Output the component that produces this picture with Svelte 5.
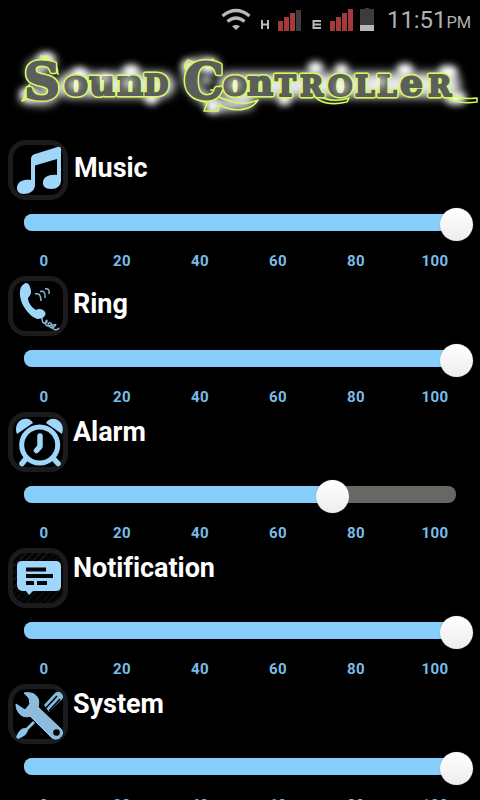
<script>
  const channels = [
    { name: 'Music', icon: 'music', value: 100, low: true },
    { name: 'Ring', icon: 'phone', value: 100, low: true },
    { name: 'Alarm', icon: 'alarm', value: 71.3 },
    { name: 'Notification', icon: 'message', value: 100 },
    { name: 'System', icon: 'tools', value: 100 }
  ];
  const ticks = [0, 20, 40, 60, 80, 100];
</script>

{#snippet logo(cls)}
  <g class={cls}>
    <text class="word"><tspan class="initial" x="24" y="99">S</tspan><tspan class="mid" x="64" y="95">o</tspan><tspan class="mid" x="89" y="95">u</tspan><tspan class="mid" x="117" y="95">n</tspan><tspan class="cap" x="144" y="95">D</tspan></text>
    <text class="word"><tspan class="initial" x="184" y="99">C</tspan><tspan class="mid" x="223" y="95">o</tspan><tspan class="mid" x="247" y="95">n</tspan><tspan class="cap" x="275" y="96">T</tspan><tspan class="cap" x="300" y="96">R</tspan><tspan class="cap" x="328" y="96">O</tspan><tspan class="cap" x="355" y="96">L</tspan><tspan class="cap" x="377" y="96">L</tspan><tspan class="mid" x="400" y="95">e</tspan><tspan class="cap" x="428" y="96">R</tspan></text>
  </g>
{/snippet}

<div class="screen">
  <header class="status">
    <svg class="signals" width="166" height="36" viewBox="0 0 166 36" aria-hidden="true">
      <g fill="none" stroke="#b8b8b8" stroke-width="3.3">
        <path d="M2.500 16Q16 5 29.500 16" />
        <path d="M7.500 21.500Q16 14.500 24.500 21.500" />
      </g>
      <path d="M12 26.300Q16 23.500 20 26.300L16 30Z" fill="#b8b8b8" />
      <path d="M42 20V29M48 20V29M42 24.500H48" stroke="#b8b8b8" stroke-width="2" />
      <path d="M101 21H93.500V28H101M93.500 24.500H101" fill="none" stroke="#b8b8b8" stroke-width="2" />
      <g fill="#a33a3b">
        <path d="M58 21h5v10h-5zM64 17h5v14h-5zM70 13h5v18h-5zM110 21h5v10h-5zM116 17h5v14h-5zM122 13h5v18h-5zM128 9h5v22h-5z" />
        <path d="M76 10h5v21h-5z" fill="#3c3c3c" />
      </g>
      <path d="M140 9h5V8h4v1h5v22h-14z" fill="#3c3c3c" />
      <path d="M140 25h14v6h-14z" fill="#b8b8b8" />
    </svg>
    <span class="clock">11:51<small>PM</small></span>
  </header>

  <svg class="logo" width="480" height="100" viewBox="0 36 480 100" aria-label="Sound Controller">
    <defs>
      <filter id="halo" filterUnits="userSpaceOnUse" x="0" y="36" width="480" height="100"><feGaussianBlur stdDeviation="5" /></filter>
      <filter id="sparks" filterUnits="userSpaceOnUse" x="0" y="36" width="480" height="100"><feGaussianBlur stdDeviation="3.5" /></filter>
    </defs>
    <g filter="url(#halo)" fill="none" stroke="#fff" stroke-linecap="round" stroke-linejoin="round">
      <path d="M50 63C32 62 27 71 40 79S60 96 44 99L26 97" stroke-width="12" opacity=".85" />
      <path d="M70 85H162M230 85H448" stroke-width="25" opacity=".9" />
      <path d="M213 65C185 58 182 81 202 96L220 106L248 103" stroke-width="12" opacity=".85" />
    </g>
    <g filter="url(#sparks)" fill="none" stroke="#fff" stroke-linecap="round">
      <path d="M27 94h5M44 59h4M78 74h3M129 71h4M151 98h1M188 66h1M208 66h2M284 99h1M314 68h3M341 70h1M403 70h4M445 72h6M212 107h1M452 98h8" stroke-width="13" />
    </g>

    <g class="swashes">
      <path d="M41 65Q47 61 41 56L51 60Q58 65 58 75M30 84Q27 89 25 90Q27 95 22 101Q32 95 41 101" />
      <path d="M187 71Q182 66 188 60Q197 65 204 60Q210 63 213 59L215 67M186 88C193 101 204 101 207 103L204 111H218L219 105C239 115 254 107 258 100C243 107 227 101 217 96L219 90H210" />
      <path d="M317 94Q330 104 349 98L347 102Q325 107 315 97M448 94Q462 100 477 98V102Q457 105 446 96" />
    </g>
    {@render logo('outline')}
    {@render logo('face')}
    <g filter="url(#sparks)" fill="none" stroke="#fff" stroke-linecap="round" opacity=".85">
      <path d="M74 85h1M104 78h1M128 83h1M206 80h1M234 85h1M341 87h1M380 82h1" stroke-width="9" />
    </g>
  </svg>

  <main>
    {#each channels as channel}
      <section>
        <div class="heading">
          <div class="badge" class:hatched={channel.icon === 'message'}>
            <svg width="60" height="60" viewBox="0 0 60 60" fill="#9fd7fb" aria-hidden="true">
              {#if channel.icon === 'music'}
                <path d="M23 19Q23 15 27 14L48 7.500Q53 5.500 53 9V40C53 46 49 49 43 49C37 49 34.500 46 35 42C35.500 37 41 34 49 35V19L27 25.500V45C27 51 21 54 16 54C11 54 8.500 51 9 47C10 41 16 39 23 40Z" />
              {:else if channel.icon === 'phone'}
                <path d="M16 8C10 11 11 23 16 31C20 38 27 43 30 43C34 43 38 40 37.500 37C36 33 31 32 28 34C23 31 20 26 20 22C23 19 24 16 22 11C21 7 18 6 16 8Z" />
                <g fill="none" stroke="#86b8d5" stroke-width="1.500">
                  <path d="M27 18Q33 16 33 25M32 15.500Q38 14 37 22M37 13Q42 12 41 18" />
                  <path d="M34 42C34 49 39 48 39 45S35 50 40 50S44 46 41 47S43 54 46 51S48 48 45 49S47 57 51 52" />
                </g>
              {:else if channel.icon === 'alarm'}
                <path d="M9 22C7 17 8 11 13 8C18 5 24 8 25 11ZM38 11C40 7 46 5 51 9C56 13 55 19 54 22Z" />
                <circle cx="31.700" cy="33" r="18" fill="none" stroke="#9fd7fb" stroke-width="5" />
                <path d="M32 24V34.500L28.500 38.500M18.500 46L14 51.500M45 46L50 51.500" fill="none" stroke="#9fd7fb" stroke-width="5.500" stroke-linecap="round" stroke-linejoin="round" />
              {:else if channel.icon === 'message'}
                <path d="M14 13H49Q53 14 53 18V38Q53 43 48 43H25L21 47L18 43H14Q9 42 9 37V18Q9 13 14 13Z" />
                <path d="M18 19.500H38V23.500H18ZM18 26H45V30H18ZM18 33H26V37H18ZM29 33H39V37H29Z" fill="#050607" />
              {:else}
                <path d="M25 37L27 39L20 46Q20 51 10 55L8 53Q12 43 18 44Z" fill="#8ac4e8" />
                <path d="M36 21L47 9Q51 6 54 10Q57 14 52 17L41 28Z" fill="#86bce0" />
                <path d="M38 24L49 12M41 27L52 15" stroke="#06080b" stroke-width="1.700" />
                <path d="M16 9C27 7 33 14 30 23L53 45C58 51 49 59 43 53L22 32C15 35 8 29 8 20L17 26L22 20L21 14Z" fill="#8dbbdc" stroke="#8dcef8" stroke-width="1" />
                <circle cx="48.500" cy="48.500" r="3.300" fill="#000" />
              {/if}
            </svg>
          </div>
          <h2 class:low={channel.low} class:wide={channel.icon === 'music'}>{channel.name}</h2>
        </div>
        <div class="slider" role="slider" aria-label={channel.name} aria-valuenow={channel.value} aria-valuemin="0" aria-valuemax="100" tabindex="-1">
          <div class="fill" style="width: {channel.value}%"><i></i></div>
        </div>
        <div class="scale">
          {#each ticks as tick}<span>{tick}</span>{/each}
        </div>
      </section>
    {/each}
  </main>
</div>

<style>
  :global(body) { background: #000; overflow: hidden; }
  .screen { width: 480px; height: 800px; overflow: hidden; background: #000; color: #fff; font-family: Roboto, sans-serif; }
  .status { display: flex; justify-content: flex-end; height: 36px; padding-right: 9px; }
  .signals { flex: none; }
  .clock { width: 84px; margin-left: 1px; text-align: right; font-size: 24px; line-height: 40px; color: #b0b0b0; white-space: nowrap; font-weight: 400; letter-spacing: -.1px; }
  .clock small { font-size: 16.500px; }
  .logo { display: block; }
  .word { font-family: "DejaVu Serif", serif; font-weight: 700; }
  .initial { font-size: 50px; }
  .mid { font-size: 36px; }
  .cap { font-size: 28px; }
  .outline { fill: #d4fb5d; stroke: #d4fb5d; stroke-width: 5px; stroke-linejoin: round; }
  .face { fill: #5c5e5b; stroke: #5c5e5b; stroke-width: 2px; stroke-linejoin: round; }
  .swashes { fill: none; stroke: #d4fb5d; stroke-width: 1.600px; stroke-linejoin: round; }
  main { display: flex; flex-direction: column; padding-top: 4px; }
  section { flex: none; height: 136px; }
  .heading { display: flex; height: 60px; padding-left: 8px; }
  .badge { width: 60px; height: 60px; box-sizing: border-box; flex: none; border: 5px solid #1b1b1f; border-radius: 18px; }
  .badge svg { display: block; margin: -5px; }
  .hatched { background: repeating-linear-gradient(135deg, #030404 0 4px, #151719 4px 5px); }
  h2 { margin: 3px 0 0 5px; font-size: 27px; line-height: 34px; font-weight: 700; letter-spacing: -.05px; }
  h2.low { margin-top: 11px; }
  h2.wide { margin-left: 6px; }
  .slider { width: 432px; height: 17px; margin: 14px 0 0 24px; border-radius: 8px; background: #666864; }
  .fill { display: flex; align-items: center; justify-content: flex-end; height: 17px; border-radius: 8px; background: #87cefa; }
  .fill i { flex: none; width: 33px; height: 33px; margin-right: -16.500px; margin-top: 3px; border-radius: 50%; background: linear-gradient(#fff, #ededed); box-shadow: 0 0 1px #777; }
  .scale { display: flex; margin: 20px 0 0 5px; }
  .scale span { width: 78px; text-align: center; font-size: 15px; line-height: 20px; font-weight: 700; letter-spacing: .4px; color: #78bdea; }
  .scale span:last-child { padding-left: 1px; }
</style>
